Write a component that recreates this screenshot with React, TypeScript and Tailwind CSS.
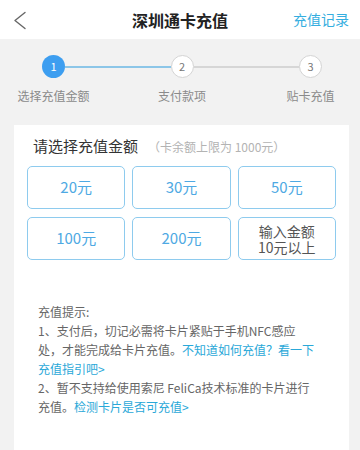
import React from 'react'

const amounts = ['20元', '30元', '50元', '100元', '200元']

const steps = [
  { n: '1', label: '选择充值金额', active: true },
  { n: '2', label: '支付款项', active: false },
  { n: '3', label: '贴卡充值', active: false }
]

const StepCircle: React.FC<{ n: string; label: string; active: boolean }> = ({ n, label, active }) => (
  <div className="flex w-[23px] flex-col items-center">
    <div
      className={
        active
          ? 'flex h-[23px] w-[23px] items-center justify-center rounded-full bg-[#3d9ef0] text-[11px] text-white'
          : 'flex h-[23px] w-[23px] items-center justify-center rounded-full border-[1.5px] border-[#d4d4d4] bg-white text-[11px] text-[#777]'
      }
    >
      {n}
    </div>
    <div className="mt-[9px] whitespace-nowrap text-[12px] leading-[17px] text-[#8a8a8a]">{label}</div>
  </div>
)

export default function App() {
  return (
    <div
      className="h-[450px] w-[360px] overflow-hidden bg-[#f2f2f2]"
      style={{ fontFamily: '"Noto Sans CJK SC", "Noto Sans", sans-serif' }}
    >
      {/* header */}
      <div className="relative flex h-[39px] items-center justify-center bg-white">
        <svg className="absolute left-[13px] top-[11px]" width="14" height="19" viewBox="0 0 14 19" fill="none">
          <path d="M12 1.5 L2 9.5 L12 17.5" stroke="#666" strokeWidth="1.4" strokeLinecap="round" strokeLinejoin="round" />
        </svg>
        <div className="text-[16px] font-bold text-[#222]">深圳通卡充值</div>
        <div className="absolute right-[11px] top-[9px] text-[14px] text-[#35aee0]">充值记录</div>
      </div>

      {/* steps */}
      <div className="flex pb-[21px] pl-[42px] pr-[38px] pt-[16px]">
        <StepCircle {...steps[0]} />
        <div className="mt-[11px] h-[1.5px] flex-1 bg-[#8cc6e8]" />
        <StepCircle {...steps[1]} />
        <div className="mt-[11px] h-[1.5px] flex-1 bg-[#d6d6d6]" />
        <StepCircle {...steps[2]} />
      </div>

      {/* card */}
      <div className="ml-[14px] mr-[11px] h-[400px] bg-white pt-[11px]">
        <div className="flex items-baseline pl-[19px]">
          <span className="text-[15px] leading-[20px] text-[#333]">请选择充值金额</span>
          <span className="ml-[10px] text-[12px] text-[#b3b3b3]">（卡余额上限为 1000元）</span>
        </div>

        <div className="mt-[10px] grid grid-cols-3 gap-x-[7px] gap-y-[8px] px-[13px]">
          {amounts.map((a) => (
            <div
              key={a}
              className="flex h-[43px] items-center justify-center rounded-[5px] border-[1.5px] border-[#8ecbee] text-[15px] text-[#4ea9e3]"
            >
              {a}
            </div>
          ))}
          <div className="flex h-[43px] flex-col items-center justify-center rounded-[5px] border-[1.5px] border-[#8ecbee] text-[14px] leading-[16px] text-[#555]">
            <span>输入金额</span>
            <span>10元以上</span>
          </div>
        </div>

        {/* tips */}
        <div className="mt-[42px] pl-[24px] text-[12px] leading-[19px] text-[#666]">
          <div>充值提示:</div>
          <div className="whitespace-nowrap">1、支付后，切记必需将卡片紧贴于手机NFC感应</div>
          <div className="whitespace-nowrap">
            处，才能完成给卡片充值。<span className="text-[#2aa8d8]">不知道如何充值？看一下</span>
          </div>
          <div className="whitespace-nowrap text-[#2aa8d8]">充值指引吧&gt;</div>
          <div className="whitespace-nowrap">2、暂不支持给使用索尼 FeliCa技术标准的卡片进行</div>
          <div className="whitespace-nowrap">
            充值。<span className="text-[#2aa8d8]">检测卡片是否可充值&gt;</span>
          </div>
        </div>
      </div>
    </div>
  )
}
